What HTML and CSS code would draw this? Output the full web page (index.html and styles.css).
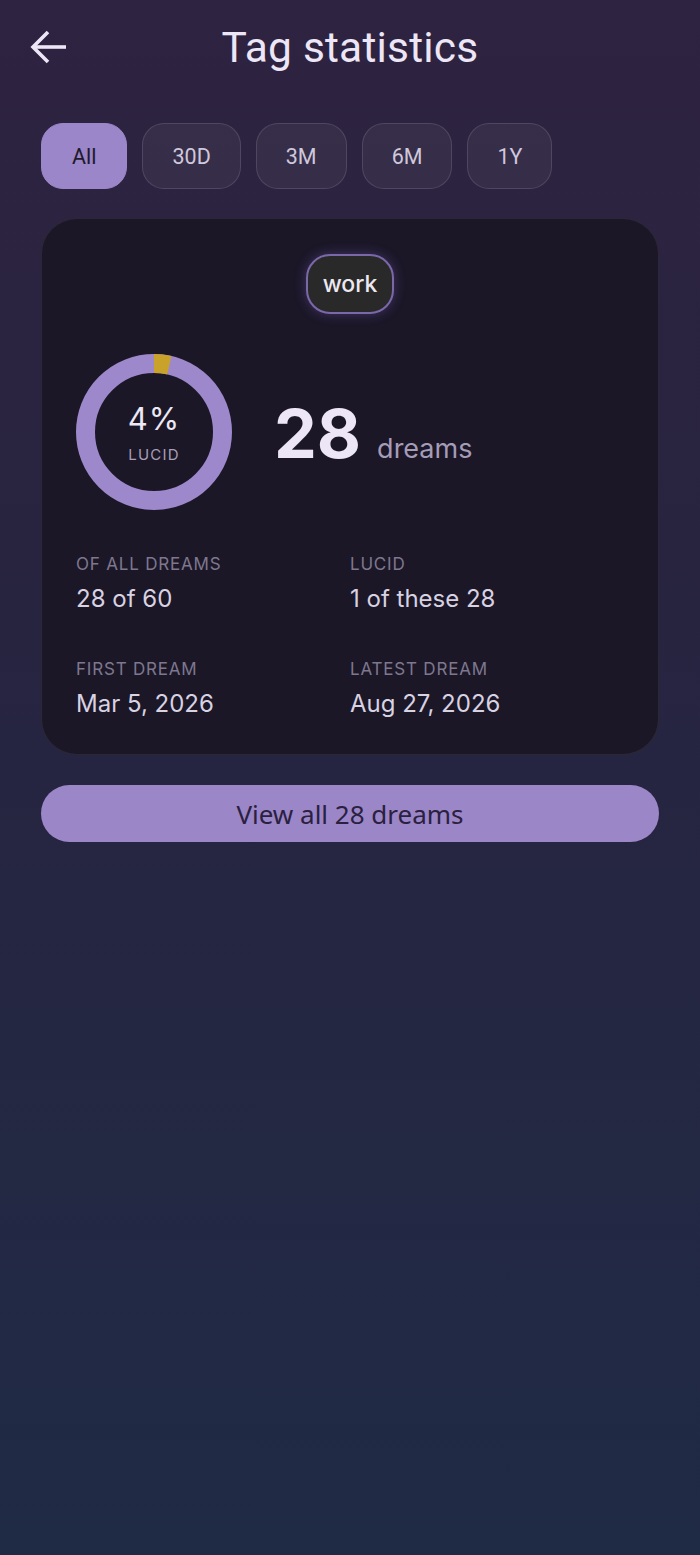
FILE: index.html
```html
<!DOCTYPE html>
<html>
<head>
<meta charset="utf-8">
<link rel="stylesheet" href="styles.css">
</head>
<body>
<div class="page">
  <header class="header">
    <svg class="back" width="40" height="40" viewBox="0 0 40 40" aria-hidden="true">
      <path d="M38 19H6" fill="none" stroke="#ece6f6" stroke-width="3.6"/>
      <path d="M20 4L5 19L20 34" fill="none" stroke="#ece6f6" stroke-width="3.6" stroke-linejoin="miter"/>
    </svg>
    <h1 class="title">Tag statistics</h1>
  </header>

  <div class="chips">
    <div class="chip active">All</div>
    <div class="chip">30D</div>
    <div class="chip">3M</div>
    <div class="chip">6M</div>
    <div class="chip">1Y</div>
  </div>

  <section class="card">
    <div class="tag-wrap"><span class="tag">work</span></div>

    <div class="summary">
      <div class="donut">
        <svg width="156" height="156" viewBox="0 0 156 156">
          <circle cx="78" cy="78" r="68.5" fill="none" stroke="#9d88cb" stroke-width="19"/>
          <circle cx="78" cy="78" r="68.5" fill="none" stroke="#c9a22a" stroke-width="19"
            stroke-dasharray="15.5 500" transform="rotate(-90 78 78)"/>
        </svg>
        <div class="donut-text">
          <div class="pct">4%</div>
          <div class="pct-label">LUCID</div>
        </div>
      </div>
      <div class="count">
        <span class="count-num">28</span>
        <span class="count-unit">dreams</span>
      </div>
    </div>

    <div class="stats">
      <div class="stat">
        <div class="stat-label">OF ALL DREAMS</div>
        <div class="stat-value">28 of 60</div>
      </div>
      <div class="stat">
        <div class="stat-label">LUCID</div>
        <div class="stat-value">1 of these 28</div>
      </div>
      <div class="stat">
        <div class="stat-label">FIRST DREAM</div>
        <div class="stat-value">Mar 5, 2026</div>
      </div>
      <div class="stat">
        <div class="stat-label">LATEST DREAM</div>
        <div class="stat-value">Aug 27, 2026</div>
      </div>
    </div>
  </section>

  <button class="view-all">View all 28 dreams</button>
</div>
</body>
</html>
```

FILE: styles.css
```css
html, body {
  margin: 0;
  padding: 0;
}
body {
  min-height: 1555px;
  background: linear-gradient(180deg, #2e2340 0%, #272440 40%, #232843 75%, #1f2a45 100%);
  font-family: Inter, "Noto Sans", sans-serif;
  color: #e8e2f2;
}
.page {
  padding: 0 41px;
}
.header {
  position: relative;
  height: 94px;
  display: flex;
  align-items: center;
  justify-content: center;
}
.back {
  position: absolute;
  left: -13px;
  top: 28px;
}
.title {
  margin: 0;
  font-family: Roboto, sans-serif;
  font-weight: 400;
  font-size: 42.5px;
  color: #ece6f6;
  letter-spacing: 0.2px;
}
.chips {
  display: flex;
  gap: 15px;
  margin-top: 29px;
}
.chip {
  height: 64px;
  padding: 0 29px;
  border: 1px solid rgba(255, 255, 255, 0.12);
  border-radius: 22px;
  background: rgba(255, 255, 255, 0.05);
  display: flex;
  align-items: center;
  font-family: Roboto, sans-serif;
  font-size: 21.5px;
  color: #cfc8dc;
}
.chip.active {
  background: #9b86c9;
  border-color: #9b86c9;
  color: #1f1a2c;
  padding: 0 30px;
}
.card {
  margin-top: 29px;
  background: #1b1727;
  border: 1px solid rgba(255, 255, 255, 0.07);
  border-radius: 36px;
  padding: 35px 34px 35px;
}
.tag-wrap {
  display: flex;
  justify-content: center;
}
.tag {
  height: 56px;
  padding: 0 15px;
  border: 2px solid #7a68a8;
  border-radius: 24px;
  background: #2a2929;
  box-shadow: 0 0 12px rgba(140, 110, 220, 0.35);
  display: flex;
  align-items: center;
  font-size: 23px;
  font-weight: 500;
  color: #ece8f2;
}
.summary {
  display: flex;
  align-items: center;
  margin-top: 40px;
}
.donut {
  position: relative;
  width: 156px;
  height: 156px;
  flex: none;
}
.donut svg {
  display: block;
}
.donut-text {
  position: absolute;
  inset: 0;
  display: flex;
  flex-direction: column;
  align-items: center;
  justify-content: center;
}
.pct {
  font-size: 31px;
  font-weight: 400;
  letter-spacing: 1px;
  color: #ece8f4;
  line-height: 36px;
}
.pct-label {
  font-size: 15px;
  letter-spacing: 1.2px;
  color: #a69fb6;
  margin-top: 8px;
}
.count {
  margin-left: 42px;
  display: flex;
  align-items: baseline;
  margin-top: 2px;
}
.count-num {
  font-size: 68px;
  font-weight: 700;
  color: #ece6f6;
  line-height: 1;
}
.count-unit {
  margin-left: 16px;
  font-size: 27px;
  color: #a59cb8;
}
.stats {
  margin-top: 44px;
  display: grid;
  grid-template-columns: 274px 1fr;
  row-gap: 45px;
}
.stat-label {
  font-size: 17px;
  letter-spacing: 0.8px;
  color: #7e778f;
  line-height: 20px;
}
.stat-value {
  margin-top: 10px;
  font-size: 24px;
  color: #d8d2e2;
  line-height: 30px;
}
.view-all {
  display: block;
  width: 100%;
  margin-top: 30px;
  height: 57px;
  border: none;
  border-radius: 29px;
  background: #9b86c8;
  font-family: "Noto Sans", sans-serif;
  font-size: 26px;
  font-weight: 400;
  color: #2a2040;
}
```
